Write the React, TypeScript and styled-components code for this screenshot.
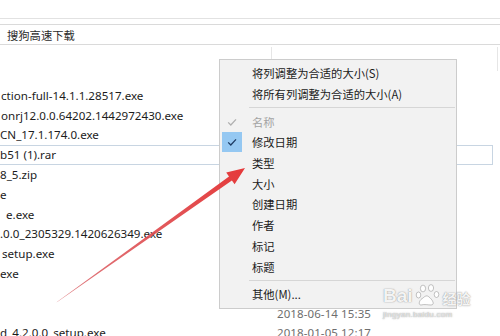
import React from 'react';
import styled, { createGlobalStyle } from 'styled-components';

const GlobalStyle = createGlobalStyle`
  html, body {
    margin: 0;
    padding: 0;
    background: #fff;
  }
  body {
    font-family: "Noto Sans", "Noto Sans CJK SC", sans-serif;
  }
`;

const Screen = styled.div`
  position: relative;
  width: 500px;
  height: 336px;
  overflow: hidden;
  background: #fff;
`;

const Ribbon = styled.div`
  height: 18px;
  border-bottom: 1px solid #e2e2e2;
`;

const AddressBar = styled.div`
  margin-top: 5px;
  height: 19px;
  border-top: 1px solid #dadada;
  border-bottom: 1px solid #dadada;
  display: flex;
  align-items: center;
  padding-left: 7px;
  font-family: "Noto Sans CJK SC", sans-serif;
  font-size: 11.3px;
  color: #2b2b2b;
`;

const Header = styled.div`
  display: flex;
  height: 24px;
  margin-top: 2px;
`;

const HeaderCell = styled.div<{ $width: number }>`
  width: ${(p) => p.$width}px;
  flex-shrink: 0;
  border-right: 1px solid #e6e6e6;
`;

const Rows = styled.div`
  padding-top: 14.5px;
`;

const Row = styled.div<{ $selected?: boolean }>`
  height: 19.8px;
  box-sizing: border-box;
  width: 493px;
  display: flex;
  align-items: center;
  border: 1px solid ${(p) => (p.$selected ? '#c8d5e2' : 'transparent')};
  border-left: none;
`;

const Name = styled.div<{ $indent: number }>`
  width: 277px;
  flex-shrink: 0;
  padding-left: ${(p) => p.$indent}px;
  box-sizing: border-box;
  font-size: 11.6px;
  color: #1c1c1c;
  white-space: nowrap;
  overflow: hidden;
`;

const DateCell = styled.div`
  font-size: 11.5px;
  color: #6e6e6e;
  white-space: nowrap;
  letter-spacing: 0.1px;
`;

const Menu = styled.div`
  position: absolute;
  left: 219px;
  top: 59px;
  width: 236px;
  padding: 3px 0;
  background: #f2f2f2;
  border: 1px solid #cccccc;
  font-family: "Noto Sans CJK SC", sans-serif;
  font-size: 11.3px;
  color: #1a1a1a;
`;

const Item = styled.div<{ $disabled?: boolean }>`
  height: 20.7px;
  display: flex;
  align-items: center;
  color: ${(p) => (p.$disabled ? '#a3a3a3' : '#1a1a1a')};
`;

const CheckCell = styled.div<{ $active?: boolean }>`
  width: 20px;
  height: 20px;
  margin-left: 2px;
  display: flex;
  align-items: center;
  justify-content: center;
  background: ${(p) => (p.$active ? '#95c8f2' : 'transparent')};
`;

const Label = styled.span`
  margin-left: 10px;
  white-space: nowrap;
`;

const Separator = styled.div`
  height: 1px;
  margin: 3px 1px 3px 29px;
  background: #d6d6d6;
`;

const Overlay = styled.svg`
  position: absolute;
  left: 0;
  top: 0;
  pointer-events: none;
`;

const Watermark = styled.div`
  position: absolute;
  left: 383px;
  top: 284px;
  display: flex;
  flex-direction: column;
  align-items: flex-start;
  color: rgba(255, 255, 255, 0.92);
  text-shadow: 0 0 1px rgba(110, 110, 110, 0.75), 0 0 2px rgba(150, 150, 150, 0.4);
`;

const MarkLine = styled.div`
  display: flex;
  align-items: flex-end;
  font-family: "Liberation Sans", sans-serif;
  font-weight: bold;
  font-size: 19px;
  line-height: 22px;
`;

const MarkCjk = styled.span`
  font-family: "Noto Sans CJK SC", sans-serif;
  font-size: 14px;
  line-height: 18px;
  font-weight: bold;
`;

const MarkSub = styled.div`
  font-family: "Liberation Sans", sans-serif;
  font-size: 8px;
  color: rgba(240, 240, 240, 0.9);
  margin-top: 3px;
  letter-spacing: 0.3px;
`;

const Check = ({ color }: { color: string }) => (
  <svg width="12" height="12" viewBox="0 0 12 12">
    <path d="M2.2 6.4 L4.8 9 L10 3.4" fill="none" stroke={color} strokeWidth="1.3" />
  </svg>
);

const files = [
  { name: 'ction-full-14.1.1.28517.exe', indent: 1 },
  { name: 'onrj12.0.0.64202.1442972430.exe', indent: 1 },
  { name: 'CN_17.1.174.0.exe', indent: 0 },
  { name: 'b51 (1).rar', indent: 0, selected: true },
  { name: '8_5.zip', indent: 0 },
  { name: 'e', indent: 0 },
  { name: 'e.exe', indent: 6 },
  { name: '.0.0_2305329.1420626349.exe', indent: 0 },
  { name: 'setup.exe', indent: 2 },
  { name: 'exe', indent: 0 },
  { name: '', indent: 0 },
  { name: '', indent: 0, date: '2018-06-14 15:35' },
  { name: 'd_4.2.0.0_setup.exe', indent: 0, date: '2018-01-05 12:17' },
];

type MenuEntry =
  | { sep: true }
  | { label: string; state?: 'disabled' | 'checked' };

const menu: MenuEntry[] = [
  { label: '将列调整为合适的大小(S)' },
  { label: '将所有列调整为合适的大小(A)' },
  { sep: true },
  { label: '名称', state: 'disabled' },
  { label: '修改日期', state: 'checked' },
  { label: '类型' },
  { label: '大小' },
  { label: '创建日期' },
  { label: '作者' },
  { label: '标记' },
  { label: '标题' },
  { sep: true },
  { label: '其他(M)...' },
];

const Paw = () => (
  <svg width="26" height="23" viewBox="0 0 26 23" style={{ margin: '0 2px 0 2px' }}>
    <g fill="rgba(255,255,255,0.93)" stroke="rgba(130,130,130,0.6)" strokeWidth="0.8">
      <ellipse cx="8" cy="4.5" rx="2.6" ry="3.4" />
      <ellipse cx="16" cy="4" rx="2.6" ry="3.4" />
      <ellipse cx="3.5" cy="11" rx="2.3" ry="3" />
      <ellipse cx="21.5" cy="10.5" rx="2.3" ry="3" />
      <path d="M6 21 C3 21 4 16 8 14 C10 12 12 11 14 13 C18 16 20 21 16 21 C13 21 10 20 6 21 Z" />
    </g>
  </svg>
);

export default function App() {
  return (
    <Screen>
      <GlobalStyle />
      <Ribbon />
      <AddressBar>搜狗高速下载</AddressBar>
      <Header>
        <HeaderCell $width={271} />
        <HeaderCell $width={225} />
      </Header>
      <Rows>
        {files.map((f, i) => (
          <Row key={i} $selected={f.selected}>
            <Name $indent={f.indent}>{f.name}</Name>
            {f.date && <DateCell>{f.date}</DateCell>}
          </Row>
        ))}
      </Rows>

      <Menu>
        {menu.map((m, i) =>
          'sep' in m ? (
            <Separator key={i} />
          ) : (
            <Item key={i} $disabled={m.state === 'disabled'}>
              <CheckCell $active={m.state === 'checked'}>
                {m.state === 'disabled' && <Check color="#b0b0b0" />}
                {m.state === 'checked' && <Check color="#1d3b63" />}
              </CheckCell>
              <Label>{m.label}</Label>
            </Item>
          )
        )}
      </Menu>

      <Overlay width="500" height="336" viewBox="0 0 500 336">
        <defs>
          <linearGradient id="shaft" x1="57" y1="302" x2="245" y2="168" gradientUnits="userSpaceOnUse">
            <stop offset="0" stopColor="#d9646a" stopOpacity="0.85" />
            <stop offset="1" stopColor="#e5393a" />
          </linearGradient>
        </defs>
        <polygon
          points="56.5,302.3 57.6,301.8 231.9,180.6 234.6,184.3 245,168 226.2,172.6 229,176.4"
          fill="url(#shaft)"
        />
      </Overlay>

      <Watermark>
        <MarkLine>
          Bai
          <Paw />
          <MarkCjk>经验</MarkCjk>
        </MarkLine>
        <MarkSub>jingyan.baidu.com</MarkSub>
      </Watermark>
    </Screen>
  );
}
